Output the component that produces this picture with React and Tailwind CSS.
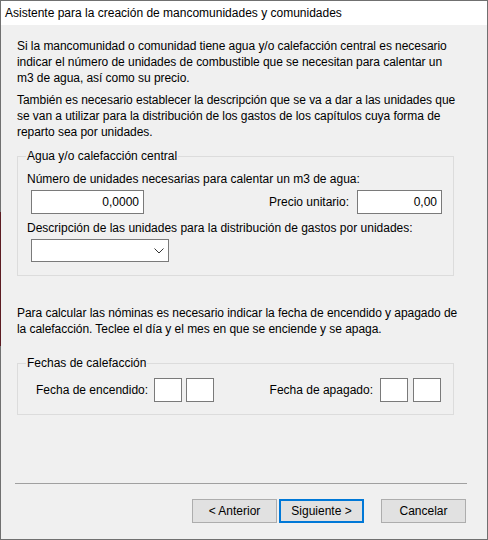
const Box = ({ className = "" }) => (
  <div className={`h-[24px] w-[28px] border border-[#7a7a7a] bg-white ${className}`} />
);

const Button = ({ children, primary }) => (
  <button
    className={`flex h-[24px] w-[85px] items-center justify-center bg-[#e1e1e1] ${
      primary ? "border-2 border-[#0078d7]" : "border border-[#adadad]"
    }`}
  >
    {children}
  </button>
);

export default function App() {
  return (
    <div
      className="flex h-[540px] w-[488px] text-[12px] leading-[16px] text-black"
      style={{ fontFamily: '"Liberation Sans", Arial, sans-serif' }}
    >
      <div className="flex w-px flex-col">
        <div className="h-[212px] bg-[#707070]" />
        <div className="h-[134px] bg-[#5c1c22]" />
        <div className="flex-1 bg-[#707070]" />
      </div>
      <div className="flex flex-1 flex-col border-y border-r border-[#707070] bg-[#f0f0f0]">
        <div className="flex h-[24px] items-center bg-white pl-[4px]">
          Asistente para la creación de mancomunidades y comunidades
        </div>

        <div className="flex flex-1 flex-col pl-[16px] pr-[21px]">
          <p className="mt-[13px] whitespace-nowrap tracking-[-0.05px]">
            Si la mancomunidad o comunidad tiene agua y/o calefacción central es necesario
            <br />
            indicar el número de unidades de combustible que se necesitan para calentar un
            <br />
            m3 de agua, así como su precio.
          </p>
          <p className="mt-[6px] whitespace-nowrap tracking-[-0.05px]">
            También es necesario establecer la descripción que se va a dar a las unidades que
            <br />
            se van a utilizar para la distribución de los gastos de los capítulos cuya forma de
            <br />
            reparto sea por unidades.
          </p>

          <fieldset className="mr-[12px] mt-[8px] border border-[#dcdcdc] pb-[13px]">
            <legend className="ml-[8px] px-[1px]">Agua y/o calefacción central</legend>
            <div className="ml-[9px] mt-[7px]">
              Número de unidades necesarias para calentar un m3 de agua:
            </div>
            <div className="mt-[3px] flex items-center pl-[13px] pr-[11px]">
              <div className="flex h-[24px] w-[113px] items-center justify-end border border-[#7a7a7a] bg-white pr-[4px]">
                0,0000
              </div>
              <div className="ml-auto mr-[8px]">Precio unitario:</div>
              <div className="flex h-[24px] w-[85px] items-center justify-end border border-[#7a7a7a] bg-white pr-[4px]">
                0,00
              </div>
            </div>
            <div className="ml-[9px] mt-[6px]">
              Descripción de las unidades para la distribución de gastos por unidades:
            </div>
            <div className="ml-[13px] mt-[3px] flex h-[23px] w-[138px] items-center justify-end border border-[#7a7a7a] bg-white pr-[4px]">
              <svg width="10" height="6" viewBox="0 0 10 6" fill="none">
                <polyline points="0.5,0.5 5,5 9.5,0.5" stroke="#333" strokeWidth="1" />
              </svg>
            </div>
          </fieldset>

          <p className="mt-[29px] whitespace-nowrap tracking-[-0.05px]">
            Para calcular las nóminas es necesario indicar la fecha de encendido y apagado de
            <br />
            la calefacción. Teclee el día y el mes en que se enciende y se apaga.
          </p>

          <fieldset className="mr-[12px] mt-[18px] border border-[#dcdcdc] pb-[12px]">
            <legend className="ml-[8px] px-[1px]">Fechas de calefacción</legend>
            <div className="mt-[7px] flex items-center pl-[18px] pr-[12px]">
              <span>Fecha de encendido:</span>
              <div className="ml-[6px] flex gap-[4px]">
                <Box />
                <Box />
              </div>
              <span className="ml-auto">Fecha de apagado:</span>
              <div className="ml-[7px] flex gap-[5px]">
                <Box />
                <Box />
              </div>
            </div>
          </fieldset>

          <div className="flex-1" />
          <div className="-ml-[2px] -mr-[1px] h-px bg-[#a0a0a0]" />
          <div className="mb-[16px] mt-[15px] flex justify-end">
            <Button>&lt; Anterior</Button>
            <div className="ml-[2px]">
              <Button primary>Siguiente &gt;</Button>
            </div>
            <div className="ml-[17px]">
              <Button>Cancelar</Button>
            </div>
          </div>
        </div>
      </div>
    </div>
  );
}
